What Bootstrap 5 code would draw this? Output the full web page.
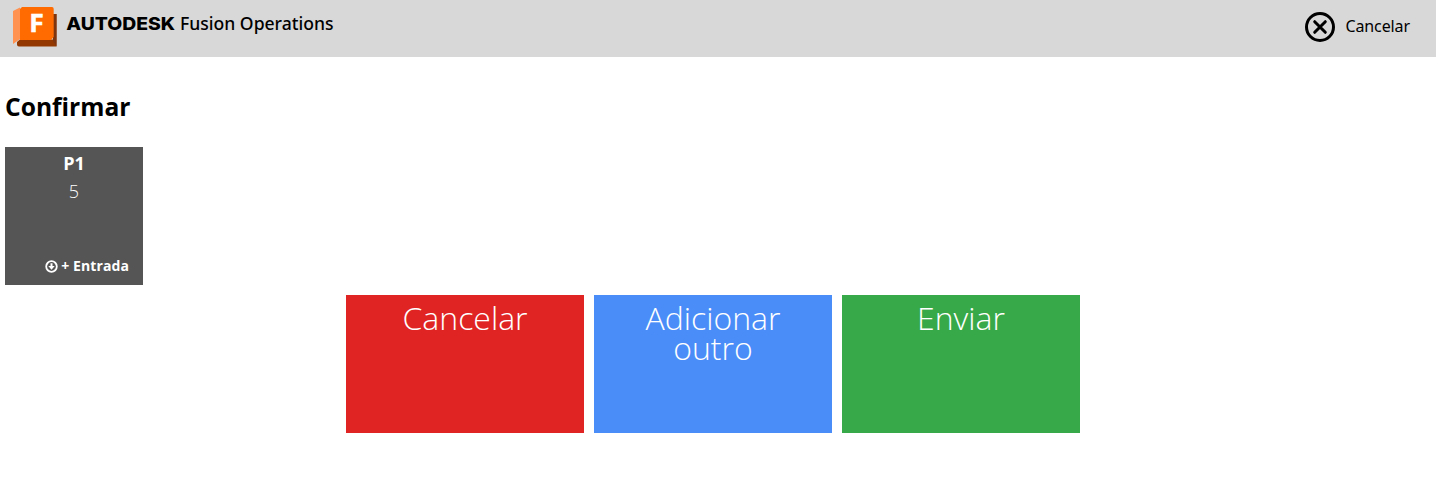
<!DOCTYPE html>
<html lang="pt">
<head>
<meta charset="utf-8">
<meta name="viewport" content="width=device-width, initial-scale=1">
<title>Autodesk Fusion Operations</title>
<link href="https://cdn.jsdelivr.net/npm/bootstrap@5.3.0/dist/css/bootstrap.min.css" rel="stylesheet">
<style>
body{font-family:"Open Sans","Noto Sans",sans-serif;color:#000;background:#fff}
.topbar{height:57px;background:#d8d8d8;padding:0 26px 0 8px}
.brand-logo{width:340px;height:57px}
.quit{font:16px/20px "Noto Sans",sans-serif;letter-spacing:-.1px;color:#000;padding-bottom:3px}
.quit svg{width:30px;height:30px;margin-right:10px}
.quit span{margin-top:-2px}
.page-title{font-size:24.6px;line-height:34px;margin:33px 0 23px}
.page-body{padding:0 5px}
.tile{height:138px;color:#fff}
.entry{width:138px;background:#555;padding:4px 14px 9px}
.entry-name{font-size:18px;line-height:25px}
.entry-qty{font-size:18px;line-height:25px;font-weight:300;margin-top:3px}
.entry-kind{font-size:14px;line-height:20px;letter-spacing:.1px}
.entry-kind svg{width:13px;height:13px;margin-right:3px}
.action{width:238px;border:0;padding:8px 30px;font-size:32px;line-height:30px;font-weight:300}
.actions{gap:10px;margin-top:10px;padding-right:10px}
.bg-cancel{background:#e02424}
.bg-add{background:#4a8df8}
.bg-send{background:#38a948}
</style>
</head>
<body>
<header class="topbar d-flex align-items-center justify-content-between">
  <svg class="brand-logo" viewBox="8 0 340 57" role="img" aria-label="Autodesk Fusion Operations">
    <path d="M13 11 20 7.5V39L13 44Z" fill="#ff9250"/>
    <path d="M17 42 20 39.5H53V14H56.5V46.5H19Q17 46.5 17 44.5Z" fill="#933800"/>
    <path d="M53 14H56.5V46.5L53 41Z" fill="#7d3510"/>
    <path d="M22 7H52Q53.7 7 53.7 9V37L51 40H20V9Z" fill="#ff6b00"/>
    <text x="29.3" y="32" fill="#fff" stroke="#fff" stroke-width=".5" font-family="Open Sans" font-weight="700" font-size="24.5" textLength="14.5" lengthAdjust="spacingAndGlyphs">F</text>
    <text x="66.2" y="30" font-family="Inter" font-weight="800" font-size="17.8" textLength="109" lengthAdjust="spacingAndGlyphs">AUTODESK</text>
    <text x="180" y="30" font-family="Noto Sans" font-weight="500" font-size="18.8" textLength="153.5" lengthAdjust="spacingAndGlyphs">Fusion Operations</text>
  </svg>
  <a href="#" class="quit d-flex align-items-center text-decoration-none">
    <svg viewBox="0 0 30 30" fill="none" stroke="#000" stroke-width="3"><circle cx="15" cy="15" r="13.5"/><path d="M9.7 9.7 20.3 20.3M20.3 9.7 9.7 20.3" stroke-linecap="round"/></svg>
    <span>Cancelar</span>
  </a>
</header>
<main class="page-body">
  <h1 class="page-title fw-bold">Confirmar</h1>
  <section class="tile entry d-flex flex-column text-center">
    <div class="entry-name fw-bold">P1</div>
    <div class="entry-qty">5</div>
    <div class="entry-kind fw-bold mt-auto d-flex align-items-center justify-content-end">
      <svg viewBox="0 0 13 13"><circle cx="6.5" cy="6.5" r="5.3" fill="none" stroke="#fff" stroke-width="1.8"/><path d="M5.5 3.3H7.5V6.1H9.7L6.5 9.7 3.3 6.1H5.5Z" fill="#fff"/></svg>
      <span>+ Entrada</span>
    </div>
  </section>
  <div class="actions d-flex justify-content-center">
    <button class="tile action bg-cancel d-flex justify-content-center align-items-start">Cancelar</button>
    <button class="tile action bg-add d-flex justify-content-center align-items-start">Adicionar outro</button>
    <button class="tile action bg-send d-flex justify-content-center align-items-start">Enviar</button>
  </div>
</main>
<script src="https://cdn.jsdelivr.net/npm/bootstrap@5.3.0/dist/js/bootstrap.bundle.min.js"></script>
</body>
</html>
